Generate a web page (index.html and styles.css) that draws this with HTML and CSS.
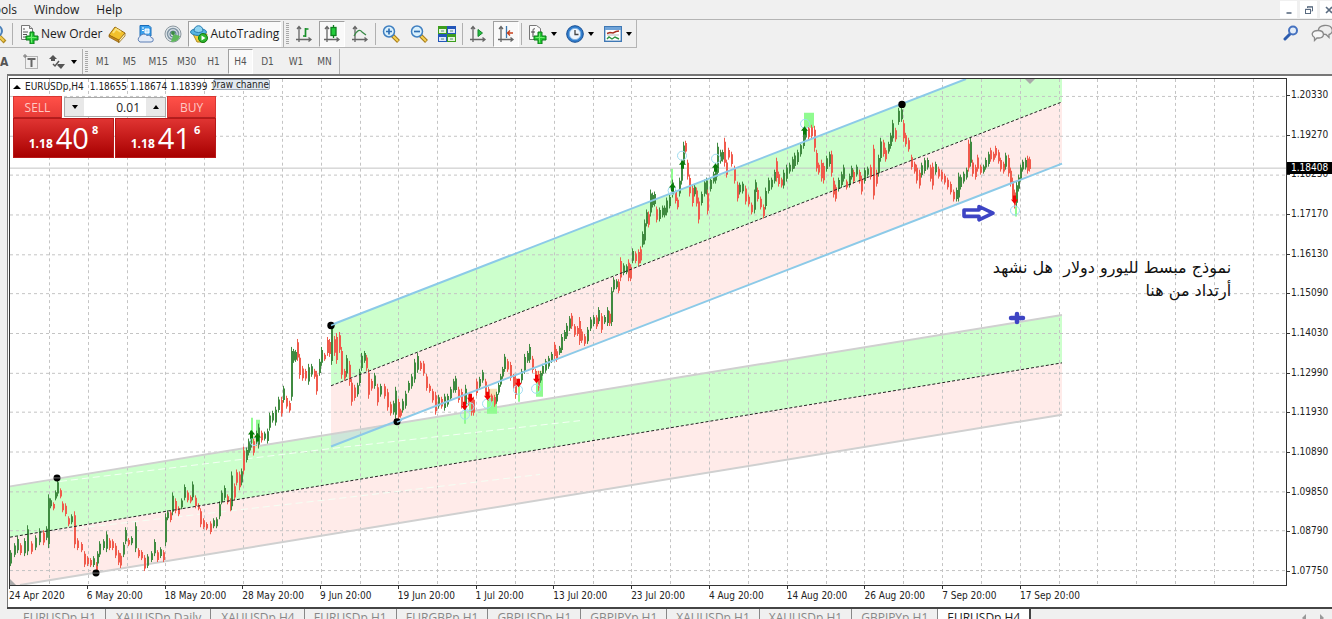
FILE: index.html
```html
<!DOCTYPE html>
<html lang="en">
<head>
<meta charset="utf-8">
<title>EURUSDp,H4</title>
<link rel="stylesheet" href="styles.css">
</head>
<body>
<header class="menubar">
  <nav class="menus"><button class="menu menu-cut">Tools</button><button class="menu">Window</button><button class="menu">Help</button></nav>
  <div class="winctl">
    <button aria-label="Minimize"><svg width="12" height="12" viewBox="0 0 12 12"><path d="M3.500 9h5" stroke="#5a6b80" stroke-width="1.600"/></svg></button>
    <button aria-label="Restore"><svg width="12" height="12" viewBox="0 0 12 12" fill="none" stroke="#5a6b80"><path d="M4.500 4V3h5v4h-1"/><path d="M4 2.800h6"/><rect x="2.500" y="5.500" width="5" height="4"/><path d="M2 5.300h6"/></svg></button>
    <button aria-label="Close"><svg width="12" height="12" viewBox="0 0 12 12"><path d="M3 3l6 6M9 3l-6 6" stroke="#5a6b80" stroke-width="1.600"/></svg></button>
  </div>
</header>

<div class="toolbar">
  <div class="bar">
    <svg class="cut-icon" width="8" height="20" viewBox="12 0 8 20"><path d="M10 11l7 7" stroke="#b08a20" stroke-width="4"/><path d="M10 11l6 6" stroke="#f2cc50" stroke-width="2"/><circle cx="9" cy="7" r="5" fill="#cfe8f8" stroke="#4a7fb8" stroke-width="2"/></svg>
    <span class="sep"></span>
    <button class="tool labelled order"><svg width="20" height="20" viewBox="0 0 20 20"><path d="M2.500 1.500h8l3 3v11h-11z" fill="#fafafa" stroke="#777"/><path d="M10.500 1.500v3h3" fill="#ddd" stroke="#777"/><path d="M4 5h2M4 8h5M4 10.500h4M4 13h3" stroke="#555"/><path d="M11 8h4v4h4v4h-4v4h-4v-4H7v-4h4z" fill="#22c832" stroke="#0a7a18"/><path d="M12.500 9.500v9M8.500 13.500h9" stroke="#70ee70"/></svg><span>New Order</span></button>
    <button class="tool" aria-label="Market"><svg width="18" height="18" viewBox="0 0 18 18"><path d="M1 10l6-8 10 6-6 8z" fill="#f2c12c" stroke="#9a6c10"/><path d="M1 10l10 5v2.500L1 12z" fill="#c78a1c" stroke="#8a5c0c" stroke-width=".7"/><path d="M11 15l6-7v3l-6 6.500z" fill="#fff1b0" stroke="#8a5c0c" stroke-width=".7"/><path d="M5 8l3-4 5 3" fill="none" stroke="#fbe27c" stroke-width="2"/></svg></button>
    <button class="tool" aria-label="Cloud"><svg width="18" height="18" viewBox="0 0 18 18"><path d="M4 .5h9l2 2V11H4z" fill="#3aa0ec" stroke="#1b6cb8"/><path d="M6 3h2M6 5.500h2M9 4h4v4H9z" stroke="#fff" fill="#bfe2fc"/><path d="M4 17a3 3 0 0 1 0-5.500 4 3.500 0 0 1 7-1 3 3 0 0 1 4 2 2 2 0 0 1 0 4.500z" fill="#e4ecf8" stroke="#5d7fb5"/></svg></button>
    <button class="tool" aria-label="Signals"><svg width="18" height="18" viewBox="0 0 18 18" fill="none"><circle cx="9" cy="9" r="8" fill="#dfe6ea" stroke="#8b979f"/><circle cx="9" cy="9" r="5.500" stroke="#8195a4" stroke-width="1.500"/><circle cx="9" cy="9" r="3" stroke="#5f7f95" stroke-width="1.200"/><path d="M9 9c0 4-2 6-2 8 6 0 8-3 9-6z" fill="#5fb85c"/><circle cx="9" cy="8" r="2" fill="#3b8a44"/></svg></button>
    <button class="tool labelled pressed auto"><svg width="18" height="18" viewBox="0 0 18 18"><path d="M3 9l4 8h8l2-8z" fill="#f4cd3e" stroke="#b08a1e"/><ellipse cx="8.500" cy="7" rx="8" ry="3.500" fill="#56b4e2" stroke="#2a7db0"/><path d="M4 6c0-7 9-7 9 0-2 2-7 2-9 0z" fill="#8fd4f2" stroke="#2a7db0"/><circle cx="13" cy="13" r="4.500" fill="#2fb52f" stroke="#137a13"/><path d="M11.500 10.500v5l4-2.500z" fill="#fff"/></svg><span>AutoTrading</span></button>
    <span class="sep tall"></span><span class="grip"></span>
    <button class="tool" aria-label="Bar chart"><svg width="18" height="18" viewBox="0 0 18 18" fill="none" stroke="#666" stroke-width="1.300"><path d="M4 2v15M1 14.500h15M2 4l2-2.500L6 4M13.500 12.500l2.500 2-2.500 2"/><path d="M10.500 3v9M10.500 4h3M8 11h2.500" stroke="#18902a" stroke-width="1.700"/></svg></button>
    <button class="tool pressed" aria-label="Candlesticks"><svg width="18" height="18" viewBox="0 0 18 18" fill="none" stroke="#666" stroke-width="1.300"><path d="M4 2v15M1 14.500h15M2 4l2-2.500L6 4M13.500 12.500l2.500 2-2.500 2"/><path d="M10.500 0v13" stroke="#108020"/><rect x="8" y="2.500" width="5" height="8" fill="#22cc3a" stroke="#108020"/></svg></button>
    <button class="tool" aria-label="Line chart"><svg width="18" height="18" viewBox="0 0 18 18" fill="none" stroke="#666" stroke-width="1.300"><path d="M4 2v15M1 14.500h15M2 4l2-2.500L6 4M13.500 12.500l2.500 2-2.500 2"/><path d="M3 11c3-6 6-7 8-4l4 3" stroke="#3a8a48"/></svg></button>
    <span class="sep"></span>
    <button class="tool" aria-label="Zoom in"><svg width="18" height="18" viewBox="0 0 18 18"><path d="M10.500 10.500l6 6" stroke="#a57a18" stroke-width="4"/><path d="M11 11l5 5" stroke="#f6d154" stroke-width="2"/><circle cx="7" cy="6.500" r="5.500" fill="#d9f0fc" stroke="#3f7fc0" stroke-width="1.500"/><path d="M4 6.500h6M7 3.500v6" stroke="#2f6fb4" stroke-width="1.700"/></svg></button>
    <button class="tool" aria-label="Zoom out"><svg width="18" height="18" viewBox="0 0 18 18"><path d="M10.500 10.500l6 6" stroke="#a57a18" stroke-width="4"/><path d="M11 11l5 5" stroke="#f6d154" stroke-width="2"/><circle cx="7" cy="6.500" r="5.500" fill="#d9f0fc" stroke="#3f7fc0" stroke-width="1.500"/><path d="M4 6.500h6" stroke="#2f6fb4" stroke-width="1.700"/></svg></button>
    <button class="tool" aria-label="Tile windows"><svg width="18" height="18" viewBox="0 0 18 18"><path fill="#3d9e1e" d="M0 1h9v8H0zM9 9h9v8H9z"/><path fill="#2356b8" d="M9 1h9v8H9zM0 9h9v8H0z"/><path fill="#e6f4e0" d="M1 4h7v4H1zM10 12h7v4h-7z"/><path fill="#dfe9fb" d="M10 4h7v4h-7zM1 12h7v4H1z"/><path d="M3 6h3M12 6h3M3 14h3M12 14h3" stroke="#5b8e7a"/></svg></button>
    <span class="sep"></span>
    <button class="tool" aria-label="Auto scroll"><svg width="18" height="18" viewBox="0 0 18 18" fill="none" stroke="#666" stroke-width="1.300"><path d="M4 2v15M1 14.500h15M2 4l2-2.500L6 4M13.500 12.500l2.500 2-2.500 2"/><path d="M9 4.500v7l4.500-3.500z" fill="#25c040" stroke="#15832a" stroke-width="1"/></svg></button>
    <button class="tool pressed" aria-label="Chart shift"><svg width="18" height="18" viewBox="0 0 18 18" fill="none" stroke="#666" stroke-width="1.300"><path d="M4 2v15M1 14.500h15M2 4l2-2.500L6 4M13.500 12.500l2.500 2-2.500 2"/><path d="M9.500 1v12" stroke="#3a78b0"/><path d="M10 8h6M13 5.500L10.500 8l2.500 2.500" stroke="#c8401c"/></svg></button>
    <span class="sep"></span>
    <button class="tool drop" aria-label="Indicators"><svg width="20" height="20" viewBox="0 0 20 20"><path d="M2.500 1.500h7l4 3v11h-11z" fill="#fafafa" stroke="#777"/><path d="M8 5c-2-1-2 1-2 3v5M4 8h4" fill="none" stroke="#444"/><path d="M11 8h4v4h4v4h-4v4h-4v-4H7v-4h4z" fill="#22c832" stroke="#0a7a18"/><path d="M12.500 9.500v9M8.500 13.500h9" stroke="#70ee70"/></svg><i class="caret"></i></button>
    <button class="tool drop" aria-label="Periods"><svg width="18" height="18" viewBox="0 0 18 18"><circle cx="9" cy="9" r="8.300" fill="#2f7ccc" stroke="#174f94"/><circle cx="9" cy="9" r="5.700" fill="#eef5fc" stroke="#7fb2e4"/><path d="M9 5v4.500h3.500" fill="none" stroke="#444" stroke-width="1.300"/></svg><i class="caret"></i></button>
    <button class="tool drop" aria-label="Templates"><svg width="18" height="18" viewBox="0 0 18 18"><rect x=".7" y="1.700" width="16.600" height="14.600" fill="#fff" stroke="#3f78b4" stroke-width="1.400"/><path d="M1 3.500h16" stroke="#6fa3d8" stroke-width="3"/><path d="M3 8.500l3-1 3 .5 3-1.500 3-.5" fill="none" stroke="#a83020" stroke-width="1.400"/><path d="M3 10h12" stroke="#bbb"/><path d="M3 14l2-2 3 2 3-2 4 2" fill="none" stroke="#2c9440" stroke-width="1.400"/></svg><i class="caret"></i></button>
  </div>
  <div class="right-tools">
    <button class="tool" aria-label="Search"><svg width="16" height="16" viewBox="0 0 16 16"><path d="M7 9l-5 5" stroke="#2c5cae" stroke-width="3" stroke-linecap="round"/><circle cx="10" cy="5.500" r="4" fill="#e4edf8" stroke="#4672c0" stroke-width="2"/></svg></button>
    <button class="tool" aria-label="Chat"><svg width="22" height="18" viewBox="0 0 22 18"><path d="M13 1.500c10-1 10 8 5 9v3l-3-3c-9 0-10-8-2-9z" fill="#eee" stroke="#888" stroke-width="1.300"/><path d="M7 6.500c7 0 7 7 1 7.500H6l-2.500 2.500V13.500C-.5 11 1 6.500 7 6.500z" fill="#f6f6f6" stroke="#888" stroke-width="1.300"/></svg></button>
  </div>
</div>

<div class="periods">
  <button class="tool letter" aria-label="Text">A</button>
  <button class="tool" aria-label="Text label"><svg width="16" height="16" viewBox="0 0 16 16"><rect x="2.500" y="2.500" width="12" height="12" fill="none" stroke="#777" stroke-dasharray="1 1"/><path d="M0 2h4M2 0v4" stroke="#777"/><path d="M4.500 5h8M8.500 5v8" stroke="#666" stroke-width="2"/></svg></button>
  <button class="tool drop arrows" aria-label="Arrows"><svg width="16" height="16" viewBox="0 0 16 16" fill="#555"><path d="M4 1l4 4H6v2H2V5H0zM9 10h4l3 0-4 5-4-4z"/><path d="M4 10l2 2 4-5" stroke="#555" stroke-width="1.500" fill="none"/></svg><i class="caret"></i></button>
  <span class="sep tall"></span><span class="grip"></span>
  <button class="tf">M1</button><button class="tf">M5</button><button class="tf wide">M15</button><button class="tf">M30</button><button class="tf">H1</button><button class="tf on">H4</button><button class="tf">D1</button><button class="tf wide">W1</button><button class="tf">MN</button>
  <span class="sep tall"></span>
</div>

<main class="frame">
  <section class="chart">
    <div class="plot">
      <svg id="chart" class="canvas" viewBox="10 78 1276 508" preserveAspectRatio="none" role="img" aria-label="EURUSDp H4 candles">
        <g>
          <path fill="#ccffcc" d="M331 325L966 78H1062V101L331 386z"/>
          <path fill="#ffebe9" d="M331 386L1062 101V163L331 447z"/>
          <path fill="#ccffcc" d="M10 487L1062 315V363L10 538z"/>
          <path fill="#ffebe9" d="M10 538L1062 363V415L20 586H10z"/>
          <path fill="#cde6d9" d="M331 434.500L397 423L331 447z"/>
        </g>
        <g id="grid" stroke="#c4c4c4" stroke-dasharray="3 3"></g>
        <path d="M10 167.500H1286" stroke="#c3c3c3"/>
        <g fill="none" stroke="#f4fff4" stroke-dasharray="7 4"><path d="M60 482L331 449L580 421"/><path d="M77 529L331 500L540 475"/></g>
        <g fill="none" stroke="#d0d0d0" stroke-width="2"><path d="M10 487L1062 315M20 586L1062 415"/></g>
        <g fill="#90fb90"><path d="M251 418h2v26h-2zM256 420h4v24h-4zM487 394h10v20h-10zM536 376h7v21h-7zM804 112h10v15h-10zM671 168h2v20h-2zM518 384h2v18h-2zM464 404h2v20h-2zM469 398h4v14h-4zM1015 206h2v10h-2z"/></g>
        <path d="M488 389h9v9h-9zM536 371h6v9h-6zM253 436h6v12h-6z" fill="#f6e0b4"/>
        <g id="candles"></g>
        <g fill="none" stroke="#8ccae8" stroke-width="2"><path d="M331 325L966 78M331 447L1062 163"/></g>
        <g fill="none" stroke="#222" stroke-dasharray="3 2"><path d="M331 386L1062 101M10 538L1062 363"/></g>
        <g fill="none" stroke="#9fdcf0"><circle cx="254" cy="442" r="4"/><circle cx="465" cy="415" r="4.500"/><circle cx="470" cy="407" r="4"/><circle cx="487" cy="404" r="4.500"/><circle cx="518" cy="390" r="4.500"/><circle cx="536" cy="389" r="4.500"/><circle cx="672" cy="190" r="4"/><circle cx="682" cy="155" r="4.500"/><circle cx="716" cy="158" r="4.500"/><circle cx="805" cy="123" r="4.500"/><circle cx="1015" cy="210" r="4.500"/></g>
        <g fill="#f00000" id="sells"></g>
        <g fill="#077a07" id="buys"></g>
        <g fill="#000"><circle cx="57" cy="478.500" r="3.500"/><circle cx="96" cy="574" r="3.500"/><circle cx="331" cy="325.500" r="3.700"/><circle cx="397" cy="422" r="3.500"/><circle cx="902" cy="103.500" r="3.700"/></g>
        <path d="M331 325.500l5-2M397 422.500l5-2" stroke="#8ccae8" stroke-width="1.500"/><path d="M53 478.500h8M92 574h8" stroke="#bbb" stroke-width=".6"/>
        <path d="M964 209.500h15v-3.500l14 6.700-14 6.700v-3.500h-15z" fill="#fff" stroke="#3d44c4" stroke-width="3.600" stroke-linejoin="round"/>
        <path d="M1017 314v8M1011 318h12" stroke="#3d44c4" stroke-width="4.500" stroke-linecap="round"/>
        <path d="M1025 78h10l-5 5z" fill="#aaa"/><path d="M10 580l6 6h-6z" fill="#aaa"/>
      </svg>
      <div class="info"><i class="up"></i><span>EURUSDp,H4</span><span class="ohlc">1.18655</span><span>1.18674</span><span>1.18399</span><span>1.18408</span></div>
      <div class="tip">Draw channe</div>
      <form class="trade">
        <button type="button" class="side">SELL</button>
        <div class="lots"><button type="button" aria-label="Decrease volume"><i class="caret"></i></button><input aria-label="Volume" value="0.01"><button type="button" aria-label="Increase volume"><i class="up"></i></button></div>
        <button type="button" class="side">BUY</button>
        <button type="button" class="quote"><b>1.18</b><span>40</span><sup>8</sup></button>
        <button type="button" class="quote"><b>1.18</b><span>41</span><sup>6</sup></button>
      </form>
      <p class="note" dir="rtl" lang="ar">نموذج مبسط لليورو دولار&nbsp; هل نشهد<br>أرتداد من هنا</p>
    </div>
    <div class="prices"><span>1.20330</span><span>1.19270</span><span>1.18230</span><span>1.17170</span><span>1.16130</span><span>1.15090</span><span>1.14030</span><span>1.12990</span><span>1.11930</span><span>1.10890</span><span>1.09850</span><span>1.08790</span><span>1.07750</span><strong>1.18408</strong></div>
    <div class="dates"><span>24 Apr 2020</span><span>6 May 20:00</span><span>18 May 20:00</span><span>28 May 20:00</span><span>9 Jun 20:00</span><span>19 Jun 20:00</span><span>1 Jul 20:00</span><span>13 Jul 20:00</span><span>23 Jul 20:00</span><span>4 Aug 20:00</span><span>14 Aug 20:00</span><span>26 Aug 20:00</span><span>7 Sep 20:00</span><span>17 Sep 20:00</span></div>
  </section>
</main>

<footer class="tabs">
  <button>EURUSDp,H1</button><button>XAUUSDp,Daily</button><button>XAUUSDp,H4</button><button>EURUSDp,H1</button><button>EURGBPp,H1</button><button>GBPUSDp,H1</button><button>GBPJPYp,H1</button><button>XAUUSDp,H1</button><button>XAUUSDp,H1</button><button>GBPJPYp,H1</button><button class="current">EURUSDp,H4</button>
  <span class="scroll"><i class="left"></i><i class="rightward"></i></span>
</footer>
<script src="chart.js"></script>
</body>
</html>
```
FILE: styles.css
```css
* { box-sizing: border-box; }
body {
  margin: 0;
  height: 100vh;
  display: flex;
  flex-direction: column;
  overflow: hidden;
  background: #f0f0f0;
  color: #1c1c1c;
  font: 12px/16px "Open Sans", "Noto Sans", sans-serif;
}
button, input { font: inherit; color: inherit; border: 0; padding: 0; margin: 0; background: none; }
svg { display: block; flex: none; }

.menubar { display: flex; justify-content: space-between; height: 20px; flex: none; border-bottom: 1px solid #b4b4b4; overflow: hidden; }
.menus { display: flex; gap: 17px; align-items: center; }
.menu-cut { width: 17px; display: flex; justify-content: flex-end; }
.winctl { display: flex; gap: 3px; padding-top: 1px; margin-right: -5px; }
.winctl button { width: 17px; height: 17px; background: #fff; display: grid; place-items: center; }

.toolbar { display: flex; justify-content: space-between; height: 28px; flex: none; }
.bar { display: flex; align-items: center; gap: 2px; border-bottom: 1px solid #b4b4b4; border-right: 1px solid #b4b4b4; padding-top: 1px; }
.cut-icon { margin-right: 2px; }
.tool { width: 26px; height: 26px; display: flex; align-items: center; justify-content: center; }
.labelled { width: auto; gap: 2px; padding: 0 1px; white-space: nowrap; }
.order { padding-left: 4px; padding-right: 0; }
.pressed { background: #f9f9f9; border: 1px solid #fff; border-top-color: #a0a0a0; border-left-color: #a0a0a0; }
.drop { width: 36px; gap: 4px; }
.sep { width: 1px; height: 22px; background: #b0b0b0; }
.tall { height: 100%; }
.grip { width: 3px; height: 22px; background: repeating-linear-gradient(#a8a8a8 0 1px, #f0f0f0 1px 2px); }
.caret, .up { width: 0; height: 0; flex: none; border: 3px solid transparent; border-top: 4px solid #000; border-bottom: 0; }
.up { border-top: 0; border-bottom: 4px solid #000; }
.right-tools { display: flex; gap: 5px; margin-right: -3px; }

.periods { display: flex; align-items: center; gap: 2px; height: 26px; padding-top: 1px; flex: none; color: #555; font-family: "DejaVu Sans Condensed", "DejaVu Sans", sans-serif; font-size: 10px; }
.letter { width: 16px; font-size: 12px; font-weight: bold; justify-content: flex-start; }
.arrows { width: 34px; color: #000; gap: 6px; }
.tf { width: 25px; height: 25px; padding-top: 1px; }
.wide { width: 28px; }
.on { background: #f9f9f9; border: 1px solid #fff; border-top-color: #a0a0a0; border-left-color: #a0a0a0; }

.frame { flex: 1; min-height: 0; display: flex; margin-left: 7px; border-top: 2px solid #777; border-left: 1px solid #777; background: #fff; }
.chart {
  flex: 1;
  display: grid;
  grid-template: minmax(0, 1fr) 21px / minmax(0, 1fr) 45px;
  padding: 2px 0 0 1px;
  font: 10px/12px "DejaVu Sans Condensed", "DejaVu Sans", sans-serif;
  color: #222;
}
.plot { position: relative; border: 1px solid #333; min-height: 0; }
.canvas { width: 100%; height: 100%; }
.info { position: absolute; left: 3px; top: 2px; display: flex; align-items: center; gap: 3px; }
.info .ohlc { margin-left: 3px; }
.info .up { margin-right: 1px; border-left-width: 4px; border-right-width: 4px; }
.tip { position: absolute; left: 203px; top: 0; width: 57px; height: 11px; line-height: 10px; display: flex; justify-content: flex-end; overflow: hidden; white-space: nowrap; background: #e3eaf1; border: 1px solid #9ba6b2; border-radius: 2px; }

.trade { position: absolute; left: 3px; top: 17px; width: 204px; display: grid; grid-template-columns: repeat(24, 1fr); color: #fff; font-family: "Open Sans", "Noto Sans", sans-serif; }
.side { grid-column: span 6; height: 22px; margin-right: 2px; font-size: 12px; color: #ffc9c4; background: linear-gradient(#ff5048, #e63a36); border: 1px solid #d83632; border-bottom: 0; box-shadow: inset 0 -1px #b02020; }
.side:nth-of-type(2) { margin: 0 1px 0 1px; }
.lots { grid-column: span 12; display: flex; height: 20px; margin-top: 1px; background: #fff; color: #222; border: 1px solid #aaa; }
.lots button { width: 19px; background: #e8e8e8; display: grid; place-items: center; }
.lots input { flex: 1; width: 0; text-align: right; padding-right: 6px; font-size: 12px; }
.quote { grid-column: span 12; height: 40px; display: flex; justify-content: center; align-items: flex-start; gap: 3px; background: linear-gradient(#e03432, #a80000); border: 1px solid #b81818; margin-right: 1px; }
.quote b { font-size: 12px; line-height: 16px; padding-top: 17px; }
.quote span { font-size: 29px; line-height: 38px; }
.quote sup { font-size: 11px; font-weight: bold; line-height: 14px; padding-top: 4px; }
.note { position: absolute; right: 4.3%; top: 177px; margin: 0; font: 16px/23px "DejaVu Sans", sans-serif; color: #111; white-space: nowrap; }

.prices { position: relative; display: flex; flex-direction: column; justify-content: space-between; padding: 11px 0 9px 4px; }
.prices span { position: relative; }
.prices span::before { content: ""; position: absolute; left: -4px; top: 6px; width: 3px; height: 1px; background: #333; }
.prices strong { position: absolute; left: 0; right: 0; top: 84px; height: 12px; padding-left: 4px; background: #000; color: #fff; font-weight: normal; }
.dates { grid-column: 1 / -1; display: flex; white-space: nowrap; margin-right: 45px; }
.dates span { flex: 0 0 6.085%; padding-top: 4px; position: relative; }
.dates span::before { content: ""; position: absolute; left: 0; top: 0; width: 1px; height: 3px; background: #333; }

.tabs { flex: none; height: 12px; margin-left: 7px; padding-left: 6px; display: flex; overflow: hidden; border-top: 2px solid #444; color: #888; line-height: 16px; }
.tabs button { height: 18px; padding: 0 9px 0 10px; border-right: 1px solid #888; white-space: nowrap; }
.tabs button:nth-child(n+4) { padding-left: 9px; }
.tabs .current { height: 20px; background: #fff; color: #222; border-right: 2px solid #444; margin-top: -2px; padding-top: 2px; }
.scroll { display: flex; gap: 14px; margin: 5px 8px 0 auto; }
.left, .rightward { width: 0; height: 0; border: 4px solid transparent; border-right-color: #999; border-left: 0; }
.rightward { border-left: 4px solid #999; border-right: 0; }
```
FILE: chart.js
```js
// Bars as x, high, low.
const bars = `10,552,566 14,545,557 17,538,553 20,545,555 24,540,556 27,527,555 31,543,554 35,537,550 39,530,545 43,532,545 46,528,540 48,496,548 50,500,508 53,504,510 55,492,500 57,481,496 60,490,498 62,503,512 65,505,516 68,518,526 71,516,524 74,513,548 77,540,550 81,544,552 84,553,567 87,558,566 90,560,567 93,558,567 96,564,572 97,553,566 99,543,557 103,541,550 106,533,552 109,540,550 112,541,550 115,545,558 118,552,565 120,555,568 123,544,557 125,529,544 128,540,546 131,538,545 135,524,552 138,550,558 141,552,560 144,557,571 147,556,568 151,553,562 154,541,556 157,552,562 160,549,558 163,552,562 165,515,546 167,512,520 170,512,522 172,494,515 175,500,513 178,508,516 181,500,509 184,486,500 187,492,502 190,497,503 192,483,500 195,497,508 198,505,510 200,510,527 203,520,529 206,524,530 210,523,534 213,520,528 216,519,528 219,503,519 221,492,504 224,487,500 227,496,504 230,500,511 231,473,510 234,485,500 236,471,485 239,473,490 241,470,485 243,448,474 246,449,462 248,440,455 250,432,450 253,440,455 256,432,445 258,425,448 261,432,442 264,433,440 267,430,443 269,414,430 272,412,422 275,408,425 278,398,412 281,398,416 283,387,402 286,397,408 289,402,412 291,348,400 293,350,362 295,351,361 297,340,360 299,355,378 302,367,380 305,370,380 308,365,384 311,365,376 314,370,378 316,372,394 319,360,375 321,348,365 324,354,360 327,338,355 329,340,356 331,325,364 334,337,355 336,334,363 339,333,352 341,348,378 344,370,380 346,356,376 349,362,385 351,380,405 354,386,400 357,384,396 359,370,385 361,354,370 364,352,362 366,356,370 368,370,398 371,380,390 374,374,388 377,385,405 380,385,396 384,385,398 387,390,410 390,403,415 393,402,414 395,388,418 398,400,420 400,410,417 402,400,412 405,392,408 408,382,392 411,375,388 414,360,382 417,354,372 420,362,370 423,362,375 426,375,390 429,385,392 432,390,402 435,393,414 438,396,408 441,398,408 444,395,410 447,395,406 450,388,400 453,380,392 455,377,392 458,388,402 461,390,408 464,395,408 465,386,410 468,395,405 471,396,415 473,398,415 476,380,395 479,378,388 482,371,382 485,380,395 488,388,400 491,395,402 494,396,406 496,393,403 498,384,394 500,375,386 502,368,378 504,355,371 507,360,371 510,363,380 513,375,388 515,376,398 518,380,386 521,370,382 524,355,373 527,352,362 529,345,362 532,357,372 535,370,380 538,372,390 540,372,382 542,365,375 545,360,372 548,357,368 551,353,362 554,343,358 556,350,361 559,347,354 561,335,352 564,331,340 566,324,338 569,317,330 571,314,328 574,325,336 577,327,335 579,318,344 581,330,342 584,335,345 587,328,343 590,318,330 593,316,325 596,316,328 598,308,323 601,314,332 604,316,323 607,308,325 609,312,325 611,288,325 613,278,291 616,280,288 618,280,292 620,258,280 623,264,274 626,265,273 628,260,280 630,265,280 632,249,262 635,252,262 638,250,265 640,247,262 642,232,246 644,220,243 646,210,225 648,212,226 650,190,215 652,193,206 654,192,205 656,207,221 659,208,220 662,206,216 664,206,216 666,198,214 669,195,207 672,180,196 675,190,202 677,198,208 679,178,195 681,160,183 683,142,165 685,141,152 687,160,178 689,175,195 692,185,205 694,185,195 696,188,205 698,198,222 701,192,204 704,180,195 706,178,193 707,190,213 710,178,190 713,172,182 715,165,182 717,143,175 720,150,162 722,150,160 724,138,165 726,160,176 728,148,158 731,152,165 734,166,182 737,182,200 739,183,193 742,182,192 745,186,203 748,195,205 751,203,213 754,190,212 755,180,193 757,188,200 760,197,208 763,205,217 765,188,208 768,178,192 771,178,188 774,170,182 776,158,180 778,172,185 781,178,186 783,170,187 786,165,180 789,163,172 792,157,170 794,153,167 797,150,163 800,143,155 803,132,147 805,128,138 808,126,138 811,125,137 814,126,150 816,150,170 818,163,173 821,160,180 823,163,182 826,156,170 829,152,165 831,151,175 833,178,196 835,185,200 838,178,190 841,172,186 843,165,180 846,180,188 849,174,186 851,166,178 853,170,182 856,165,175 859,170,182 861,176,193 864,168,182 867,167,175 870,165,178 873,145,198 876,170,185 878,155,175 880,138,160 883,140,155 885,148,160 888,142,152 890,133,147 892,120,140 895,128,140 898,108,123 901,107,120 903,120,140 905,133,145 908,138,150 911,155,168 914,162,172 916,165,182 919,170,187 921,163,176 924,158,172 927,158,168 930,165,180 932,163,188 935,162,173 938,167,177 941,170,180 944,174,183 947,178,188 950,182,193 953,190,200 956,188,200 958,173,200 960,175,188 963,172,182 966,168,178 968,140,170 970,138,165 972,160,175 975,165,178 977,155,170 980,165,173 983,165,172 985,158,168 988,152,165 990,148,160 993,152,160 995,146,156 998,150,162 1000,158,170 1003,162,172 1005,153,168 1008,155,175 1010,168,185 1012,178,198 1014,190,207 1016,182,205 1018,175,190 1020,165,180 1022,160,170 1025,158,168 1027,156,172 1029,157,170`
  .split(" ").map(b => b.split(",").map(Number));

const falling = new Set([128, 175, 195, 236, 243, 261, 281, 297, 305, 327, 334, 339, 387, 400, 420, 458, 476, 507, 554, 571, 579, 601, 620, 628, 640, 685, 707, 724, 728, 737, 776, 808, 811, 831, 846, 853, 873, 883, 895, 930, 968, 977, 990, 995, 1008, 1029]);

const fill = (id, markup) => { document.getElementById(id).innerHTML = markup; };
const line = (x1, y1, x2, y2) => `<path d="M${x1} ${y1}L${x2} ${y2}"/>`;

let grid = "";
for (let i = 0; i < 32; i++) { const x = Math.round(49 + i * 38.83) + 0.5; grid += line(x, 78, x, 586); }
for (let i = 0; i < 13; i++) { const y = Math.round(95 + i * 39.65) + 0.5; grid += line(10, y, 1286, y); }
fill("grid", grid);

let prev = 570;
let out = "";
for (const [x, hi, lo] of bars) {
  const mid = (hi + lo) / 2;
  const color = mid <= prev && !falling.has(x) ? "#3f8a40" : "#f05a4c";
  const pad = Math.min(3, (lo - hi) * 0.12);
  out += `<g stroke="${color}">` + line(x + 0.5, hi - 1, x + 0.5, lo + 1) + `<path stroke-width="2" d="M${x + 1} ${hi + pad}V${lo - pad}"/></g>`;
  prev = mid;
}
fill("candles", out);

fill("sells", [[464, 408], [470, 400], [487, 398], [518, 385], [536, 381], [1014, 201]]
  .map(([x, y]) => `<path d="M${x - 1} ${y - 6}h3v4h2l-3.500 4.500-3.500-4.500h2z"/>`).join(""));
fill("buys", [[251, 434], [257, 437], [672, 186], [682, 163], [715, 166], [804, 129]]
  .map(([x, y]) => `<path d="M${x - 1} ${y + 5}h3v-4h2l-3.500-4.500-3.500 4.500h2z"/>`).join(""));
```
